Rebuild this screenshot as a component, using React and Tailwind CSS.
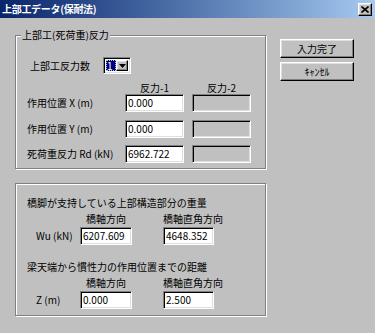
const sunken =
  "border border-t-[#808080] border-l-[#808080] border-b-white border-r-white shadow-[inset_1px_1px_0_#000,inset_-1px_-1px_0_#dfdfdf]";
const raised =
  "border border-t-white border-l-white border-b-black border-r-black shadow-[inset_-1px_-1px_0_#808080,inset_1px_1px_0_#dfdfdf]";
const etched =
  "relative border border-[#808080] shadow-[1px_1px_0_#fff,inset_1px_1px_0_#fff]";

function Field({ value, width = "w-[59px]", disabled = false }) {
  return (
    <div
      className={`${sunken} ${width} h-[18px] flex items-center pl-[2px] text-[10px] leading-none text-black ${
        disabled ? "bg-[#c0c0c0]" : "bg-white"
      }`}
    >
      {value}
    </div>
  );
}

function Button({ children }) {
  return (
    <div
      className={`${raised} w-[74px] h-[19px] flex items-center justify-center text-[10px] leading-none text-black bg-[#c0c0c0]`}
    >
      {children}
    </div>
  );
}

function Combo() {
  return (
    <div className={`${sunken} w-[28px] h-[17px] bg-white flex p-[2px]`}>
      <div className="flex-1 bg-[#000080] outline outline-1 outline-dotted outline-[#c0c0c0] -outline-offset-1 flex items-center pl-[1px] text-[10px] leading-none text-white">
        1
      </div>
      <div className={`${raised} w-[12px] flex items-center justify-center bg-[#c0c0c0]`}>
        <svg width="7" height="4" viewBox="0 0 7 4">
          <path d="M0 0h7L3.5 4z" fill="#000" />
        </svg>
      </div>
    </div>
  );
}

function ReactionRow({ label, value, className = "" }) {
  return (
    <div className={`flex items-center ${className}`}>
      <div className="w-[109px] pl-[11px] text-[10px] leading-none whitespace-nowrap">{label}</div>
      <Field value={value} />
      <div className="w-[8px]" />
      <Field value="" disabled />
    </div>
  );
}

function DirHeader({ className = "" }) {
  return (
    <div className={`flex h-[12px] items-center text-[10px] leading-none ${className}`}>
      <div className="w-[64px]" />
      <div className="w-[52px] text-center whitespace-nowrap">橋軸方向</div>
      <div className="w-[31px]" />
      <div className="w-[51px] text-center whitespace-nowrap">橋軸直角方向</div>
    </div>
  );
}

function DirRow({ label, a, b, className = "" }) {
  return (
    <div className={`flex items-center ${className}`}>
      <div className="w-[64px] pl-[20px] text-[10px] leading-none whitespace-nowrap">{label}</div>
      <Field value={a} width="w-[52px]" />
      <div className="w-[31px]" />
      <Field value={b} width="w-[51px]" />
    </div>
  );
}

export default function App() {
  return (
    <div
      className="w-[375px] h-[333px] overflow-hidden bg-[#c0c0c0] text-black"
      style={{ fontFamily: '"Noto Sans CJK JP", "Noto Sans", sans-serif' }}
    >
      {/* title bar */}
      <div className="h-[18px] flex items-center justify-between pl-[2px] pr-[3px] bg-gradient-to-r from-[#0a246a] to-[#a6caf0]">
        <span className="text-[10px] font-bold text-white leading-none tracking-[-0.3px]">
          上部工データ(保耐法)
        </span>
        <div className={`${raised} w-[14px] h-[13px] bg-[#c0c0c0] flex items-center justify-center`}>
          <svg width="8" height="7" viewBox="0 0 8 7">
            <path d="M0.5 0.5L7.5 6.5M7.5 0.5L0.5 6.5" stroke="#000" strokeWidth="1.6" />
          </svg>
        </div>
      </div>

      <div className="flex pl-[15px]">
        <div className="flex flex-col">
          {/* group 1 */}
          <div className={`${etched} mt-[17px] w-[251px] h-[134px] pt-[21px]`}>
            <div className="absolute -top-[7px] left-[5px] px-[1px] bg-[#c0c0c0] text-[10px] leading-[12px] whitespace-nowrap">
              上部工(死荷重)反力
            </div>
            <div className="flex items-center">
              <div className="w-[87px] pl-[14px] text-[10px] leading-none">上部工反力数</div>
              <Combo />
            </div>
            <div className="flex h-[12px] mt-[8px] items-center text-[10px] leading-none">
              <div className="w-[109px]" />
              <div className="w-[59px] text-center">反力-1</div>
              <div className="w-[8px]" />
              <div className="w-[59px] text-center">反力-2</div>
            </div>
            <ReactionRow label="作用位置 X (m)" value="0.000" />
            <ReactionRow label="作用位置 Y (m)" value="0.000" className="mt-[8px]" />
            <ReactionRow label="死荷重反力 Rd (kN)" value="6962.722" className="mt-[7px]" />
          </div>

          {/* group 2 */}
          <div className={`${etched} mt-[14px] w-[251px] h-[133px] pt-[13px]`}>
            <div className="pl-[11px] h-[12px] flex items-center text-[10px] leading-none whitespace-nowrap">
              橋脚が支持している上部構造部分の重量
            </div>
            <DirHeader className="mt-[4px]" />
            <DirRow label="Wu (kN)" a="6207.609" b="4648.352" className="mt-[2px]" />
            <div className="pl-[11px] mt-[16px] h-[12px] flex items-center text-[10px] leading-none whitespace-nowrap">
              梁天端から慣性力の作用位置までの距離
            </div>
            <DirHeader className="mt-[4px]" />
            <DirRow label="Z (m)" a="0.000" b="2.500" className="mt-[2px]" />
          </div>
        </div>

        {/* buttons */}
        <div className="ml-[14px] mt-[21px] flex flex-col gap-[4px]">
          <Button>入力完了</Button>
          <Button>ｷｬﾝｾﾙ</Button>
        </div>
      </div>
    </div>
  );
}
